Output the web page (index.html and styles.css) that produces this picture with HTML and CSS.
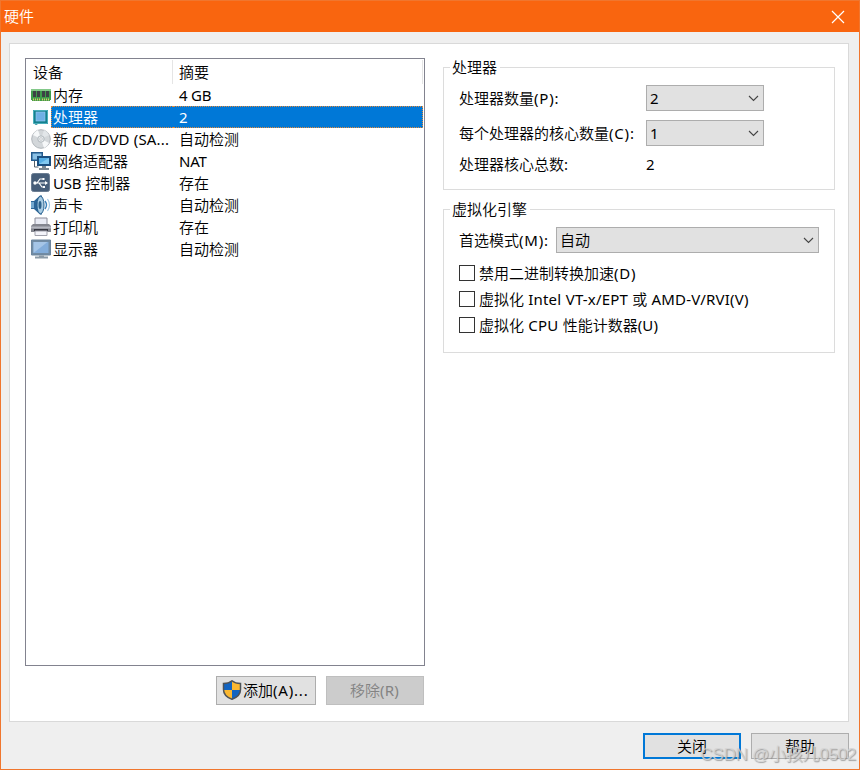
FILE: index.html
```html
<!DOCTYPE html>
<html lang="zh-CN">
<head>
<meta charset="utf-8">
<title>硬件</title>
<link rel="stylesheet" href="styles.css">
</head>
<body>
<div class="window">
  <header class="titlebar">
    <span>硬件</span>
    <svg class="close" width="14" height="14" viewBox="0 0 14 14"><path d="M1 1 13 13M13 1 1 13" stroke="#fff" stroke-width="1.2" fill="none"/></svg>
  </header>
  <main class="panel">
    <section class="left">
      <div class="list">
        <div class="head"><span class="dev">设备</span><span class="sum">摘要</span></div>
        <div class="row">
          <svg class="icon" viewBox="0 0 20 20"><path d="M0 4h20v11h-1v1H1v-1H0z" fill="#3f9d4b"/><path d="M0 4h20v2H0z" fill="#83c989"/><path d="M2 6h3v6H2zM6 6h3v6H6zM11 6h3v6h-3zM15 6h3v6h-3z" fill="#3c4245"/><path d="M2 14.5h7M11 14.5h7" stroke="#d9c66b" stroke-width="2" stroke-dasharray="1 1"/></svg>
          <span class="dev">内存</span><span class="sum"><b class="tight">4 GB</b></span></div>
        <div class="row selected">
          <svg class="icon" viewBox="0 0 20 20"><path d="M2 3h15v14H7l-2 1-3-2z" fill="#15808f"/><path d="M2.500 3.500h14v13h-14z" fill="none" stroke="#4aaeba"/><rect x="5" y="5" width="9" height="9" fill="#6fb0e5" stroke="#9bcdf0" stroke-width=".6"/></svg>
          <span class="dev">处理器</span><span class="sum"><b>2</b></span></div>
        <div class="row">
          <svg class="icon" viewBox="0 0 20 20"><circle cx="10" cy="10" r="9.300" fill="#d3d7da" stroke="#b0b5ba"/><path d="M10 10 2 6a9 9 0 0 1 5-5zM10 10l8 4a9 9 0 0 1-5 5z" fill="#f6f8f9"/><path d="m10 10 3-9a9 9 0 0 1 5 5z" fill="#e2e6e9"/><circle cx="10" cy="10" r="3.200" fill="#e8ecee" stroke="#a6adb3" stroke-width=".8"/><circle cx="10" cy="10" r="1.300" fill="#fff" stroke="#9aa1a7" stroke-width=".5"/></svg>
          <span class="dev">新 <b>CD/DVD (SA...</b></span><span class="sum">自动检测</span></div>
        <div class="row">
          <svg class="icon" viewBox="0 0 20 20"><path d="M0 1h12v9H0z" fill="#245b8d"/><path d="M1.500 2.500h9v6h-9z" fill="#8bc1e5"/><path d="M3.500 10v6h4" stroke="#555f69" fill="none"/><path d="M6 5h14v10H6z" fill="#1b4f80"/><path d="M8 7h10v6H8z" fill="#55aee5"/><path d="M8 13 18 7v6z" fill="#82c9f0"/><path d="M11 15h4v2h3v2H8v-2h3z" fill="#7c8993"/></svg>
          <span class="dev">网络适配器</span><span class="sum"><b class="tight">NAT</b></span></div>
        <div class="row">
          <svg class="icon" viewBox="0 0 20 20"><rect x=".5" y=".5" width="18" height="18" rx="2" fill="#475e79" stroke="#6b7d92"/><path d="M3 10h13M6 10l3-4h3M8 10l3 4h2" stroke="#fff" fill="none" stroke-width="1.200"/><circle cx="4" cy="10" r="1.700" fill="#fff"/><path d="m14 8 3 2-3 2zM11.500 5h2v2h-2zM12 13h2v2h-2z" fill="#fff"/></svg>
          <span class="dev"><b class="usb">USB</b> 控制器</span><span class="sum">存在</span></div>
        <div class="row">
          <svg class="icon" viewBox="0 0 20 20"><path d="M0 6h3l6-5.500h2v19H9L3 14H0z" fill="#2c6598"/><path d="M0 7h3v6H0z" fill="#75a9cf"/><ellipse cx="9.500" cy="10" rx="3.500" ry="8.800" fill="#a9cce3" stroke="#28618f"/><ellipse cx="9" cy="10" rx="1.500" ry="4" fill="#2d628c"/><path d="M14 6q3 4 0 8" fill="none" stroke="#3b83bc" stroke-width="1.400"/><path d="M16.500 4q4 6 0 12" fill="none" stroke="#9fc8e5" stroke-width="1.200"/></svg>
          <span class="dev">声卡</span><span class="sum">自动检测</span></div>
        <div class="row">
          <svg class="icon" viewBox="0 0 20 20"><path d="M4 1h12v8H4z" fill="#e9ebf4" stroke="#8b8c99"/><path d="M2 7h16l2 2v6H0V9z" fill="#84868f"/><path d="M0 9.500h20v2H0z" fill="#b6b8c1"/><path d="M3 12h14v2H3z" fill="#353640"/><path d="M4 14h12v4.500H4z" fill="#f4f4fa" stroke="#a0a1ac"/></svg>
          <span class="dev">打印机</span><span class="sum">存在</span></div>
        <div class="row">
          <svg class="icon" viewBox="0 0 20 20"><path d="M.5 1h19v15H.5z" fill="#718ba4" stroke="#6c859d"/><path d="M2.500 3h15v11h-15z" fill="#83addb"/><path d="M2.500 14V3h14z" fill="#a5c5e7"/><path d="M8 16.500h5v1h4v2H4v-2h4z" fill="#8a99a6"/></svg>
          <span class="dev">显示器</span><span class="sum">自动检测</span></div>
      </div>
      <div class="actions">
        <button class="btn add"><svg width="20" height="20" viewBox="0 0 20 20"><path d="M10 .8C8 2.500 4 3.500 1.500 3.500v6C1.500 14 5 17.500 10 19.300c5-1.800 8.500-5.300 8.500-9.800v-6C16 3.500 12 2.500 10 .8z" fill="#fbb831"/><path d="M10 1C8 2.500 4 3.500 1.500 3.500V10H10zM10 10h8.500c0 4-3.500 7.500-8.500 9.200z" fill="#1264c1"/><path d="M10 .8C8 2.500 4 3.500 1.500 3.500v6C1.500 14 5 17.500 10 19.300c5-1.800 8.500-5.300 8.500-9.800v-6C16 3.500 12 2.500 10 .8z" fill="none" stroke="#4e5358" stroke-width="1.500"/></svg><span>添加<b class="wide">(A)...</b></span></button>
        <button class="btn remove" disabled><span>移除<b>(R)</b></span></button>
      </div>
    </section>
    <section class="right">
      <div class="group cpu">
        <h2>处理器</h2>
        <span>处理器数量<b class="wide">(P):</b></span>
        <div class="select"><b>2</b><svg width="11" height="7" viewBox="0 0 11 7"><path d="M1 1l4.500 4.500L10 1" fill="none" stroke="#444" stroke-width="1.100"/></svg></div>
        <span>每个处理器的核心数量<b class="wide">(C):</b></span>
        <div class="select"><b>1</b><svg width="11" height="7" viewBox="0 0 11 7"><path d="M1 1l4.500 4.500L10 1" fill="none" stroke="#444" stroke-width="1.100"/></svg></div>
        <span class="total">处理器核心总数<b>:</b></span><span class="total"><b>2</b></span>
      </div>
      <div class="group virt">
        <h2>虚拟化引擎</h2>
        <div class="mode"><span>首选模式<b class="wide">(M):</b></span>
          <div class="select"><span>自动</span><svg width="11" height="7" viewBox="0 0 11 7"><path d="M1 1l4.500 4.500L10 1" fill="none" stroke="#444" stroke-width="1.100"/></svg></div></div>
        <div class="check"><i></i><span>禁用二进制转换加速<b class="wide">(D)</b></span></div>
        <div class="check"><i></i><span>虚拟化 <b>Intel VT-x/EPT</b> 或 <b>AMD-V/RVI(V)</b></span></div>
        <div class="check"><i></i><span>虚拟化 <b>CPU</b> 性能计数器<b>(U)</b></span></div>
      </div>
    </section>
  </main>
  <footer class="footer">
    <button class="btn primary"><span>关闭</span></button>
    <button class="btn"><span>帮助</span></button>
  </footer>
  <div class="watermark">CSDN @小孩儿0502</div>
</div>
</body>
</html>
```
FILE: styles.css
```css
* { box-sizing: border-box; }
body {
  margin: 0;
  font: 350 15px/22px "Noto Sans", "Noto Sans CJK SC", sans-serif;
  color: #000;
}
/* Latin runs are slightly heavier and wider than the Chinese text */
b { font-weight: 400; letter-spacing: .17px; }
b.wide { letter-spacing: .8px; }
b.tight { letter-spacing: -.2px; }
b.usb { letter-spacing: -.2px; }
.window {
  position: relative;
  width: 860px;
  height: 770px;
  border: 1px solid #f0762e;
  background: #efefef;
  overflow: hidden;
  white-space: nowrap;
}
.titlebar {
  height: 31px;
  margin-right: -1px;
  padding: 0 15px 0 3px;
  display: flex;
  align-items: center;
  justify-content: space-between;
  background: #f9650f;
  color: #fff;
}
.titlebar span { padding-bottom: 2px; }
.panel {
  margin: 11px 0 0 8px;
  width: 840px;
  height: 679px;
  border: 1px solid #d9d9d9;
  background: #fff;
  display: flex;
  padding: 14px 13px 0 15px;
}
.left { width: 400px; margin-right: 18px; }
.list {
  height: 608px;
  border: 1px solid #82838f;
  padding: 1px 1px 0 0;
}
.head, .row { display: flex; align-items: center; }
.head { height: 24px; border-right: 1px solid #e5e5e5; }
.head span { height: 24px; line-height: 24px; }
.head .dev { width: 147px; padding-left: 7px; border-right: 1px solid #e5e5e5; }
.head .sum { padding-left: 6px; }
.row { height: 22px; padding-left: 5px; }
.icon { width: 20px; height: 20px; flex: none; }
.row .dev { width: 122px; height: 22px; padding-left: 2px; }
.row .sum { flex: 1; height: 22px; padding-left: 6px; }
.row .dev, .row .sum { line-height: 22px; }
.selected .dev, .selected .sum {
  background: #0078d7;
  color: #fff;
  border: 1px dotted #e28a3c;
  line-height: 20px;
}
.selected .dev { border-right: 0; padding-left: 1px; }
.selected .sum { border-left: 0; }
.actions { display: flex; justify-content: flex-end; gap: 10px; padding: 10px 1px 0 0; }
.btn {
  width: 98px;
  height: 26px;
  padding: 0 0 1px;
  border: 1px solid #adadad;
  background: #e1e1e1;
  color: #000;
  font: inherit;
  display: flex;
  align-items: center;
  justify-content: center;
}
.actions .btn { height: 29px; padding-bottom: 2px; }
.actions .add { width: 100px; justify-content: flex-start; padding-left: 5px; gap: 1px; }
.actions .remove { background: #ccc; border-color: #bfbfbf; color: #838383; padding-right: 1px; }
.right { width: 392px; padding-top: 9px; }
.group { position: relative; border: 1px solid #dcdcdc; padding: 17px 15px 0; }
.group h2 {
  position: absolute;
  left: 6px;
  top: -12px;
  margin: 0;
  padding: 0 3px 0 2px;
  font: inherit;
  background: #fff;
}
.cpu {
  height: 123px;
  display: grid;
  grid-template-columns: 187px 118px;
  grid-template-rows: 26px 26px 22px;
  row-gap: 9px;
  align-items: center;
}
.total { margin-top: -4px; }
.select {
  height: 26px;
  border: 1px solid #adadad;
  background: #e1e1e1;
  display: flex;
  align-items: center;
  justify-content: space-between;
  padding: 0 4px 0 3px;
}
.virt { height: 144px; margin-top: 19px; }
.mode { display: flex; align-items: center; justify-content: space-between; margin-bottom: 7px; }
.mode .select { width: 263px; }
.check { display: flex; align-items: center; height: 26px; }
.check span { word-spacing: .4px; }
.check i { width: 16px; height: 16px; border: 1px solid #333; margin-right: 4px; }
.footer { display: flex; justify-content: flex-end; gap: 10px; padding: 11px 10px 0 0; }
.primary { border: 2px solid #0078d7; }
.watermark {
  position: absolute;
  right: 3px;
  bottom: 3px;
  font: 400 17px/22px "Liberation Sans", "Noto Sans CJK SC", sans-serif;
  letter-spacing: -.25px;
  color: rgba(212, 212, 212, .8);
  text-shadow: 1px 1px 1px rgba(110, 110, 110, .6);
}
```
